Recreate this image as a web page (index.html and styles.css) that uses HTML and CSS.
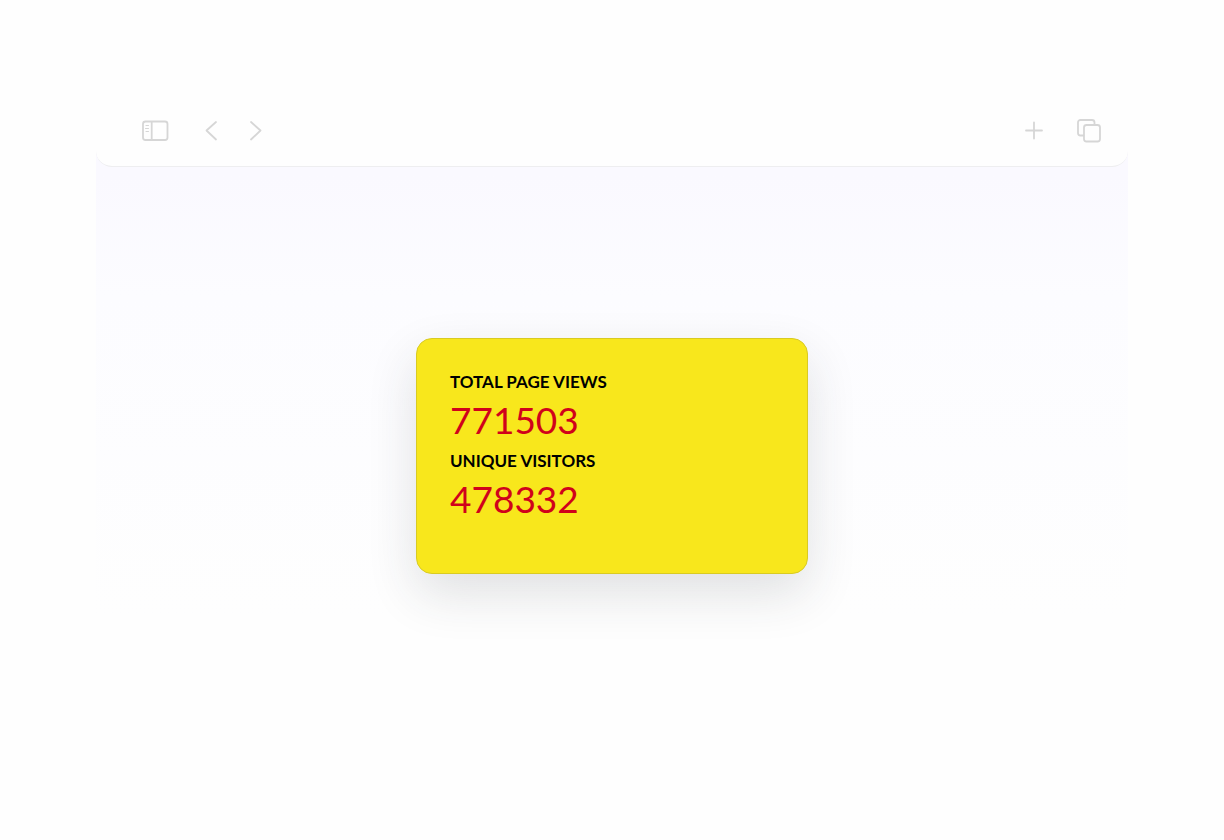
FILE: index.html
```html
<!DOCTYPE html>
<html lang="en">
<head>
  <meta charset="UTF-8">
  <meta name="viewport" content="width=device-width, initial-scale=1">
  <title>Page statistics</title>
  <link rel="stylesheet" href="styles.css">
</head>
<body>
<div class="window">
  <header class="toolbar">
    <div class="group">
      <button class="button" type="button" aria-label="Toggle sidebar">
        <svg width="28" height="28" viewBox="0 0 28 28">
          <rect x="2" y="4.500" width="24.500" height="18.500" rx="2.500"/>
          <path d="M10.700 5v18"/>
          <path class="thin" d="M5 8.500h2.500M4.500 11.500h3M5 14.500h2.500"/>
        </svg>
      </button>
      <button class="button back" type="button" aria-label="Back">
        <svg width="28" height="28" viewBox="0 0 28 28">
          <path d="M18 5L8.500 13.500l9.500 9"/>
        </svg>
      </button>
      <button class="button" type="button" aria-label="Forward">
        <svg width="28" height="28" viewBox="0 0 28 28">
          <path d="M9 5l9.500 8.500-9.500 9"/>
        </svg>
      </button>
    </div>
    <div class="group">
      <button class="button" type="button" aria-label="New tab">
        <svg width="28" height="28" viewBox="0 0 28 28">
          <path d="M14 5.500v16M6 13.500h16"/>
        </svg>
      </button>
      <button class="button" type="button" aria-label="Show all tabs">
        <svg width="28" height="28" viewBox="0 0 28 28">
          <path d="M8.500 18.500H5.500A2.500 2.500 0 0 1 3 16V5.500A2.500 2.500 0 0 1 5.500 3H17a2.500 2.500 0 0 1 2.500 2.500V8"/>
          <rect x="9" y="8" width="16" height="16.500" rx="2.500"/>
        </svg>
      </button>
    </div>
  </header>
  <main class="content">
    <dl class="card">
      <dt class="label">TOTAL PAGE VIEWS</dt>
      <dd class="number">771503</dd>
      <dt class="label">UNIQUE VISITORS</dt>
      <dd class="number">478332</dd>
    </dl>
  </main>
</div>
</body>
</html>
```
FILE: styles.css
```css
* {
    box-sizing: border-box;
}

body {
    margin: 0;
    padding: 96px;

    background: #fefefe;
    color: #000;
    font-family: Lato, sans-serif;
}

.window {
    background: linear-gradient(#faf9ff 80px, #fcfcff 200px, #fefefe 520px);
}

.toolbar {
    height: 71px;
    padding: 0 25px 0 45px;

    display: flex;
    align-items: center;
    justify-content: space-between;

    background: #fefefe;
    border-bottom: 1px solid #eeeef0;
    border-radius: 0 0 16px 16px;
}

.group {
    display: flex;
    align-items: center;
    gap: 16px;
}

.group:last-child {
    gap: 27px;
}

.button {
    width: 28px;
    height: 28px;
    padding: 0;

    background: none;
    border: 0;
}

.button svg {
    display: block;

    fill: none;
    stroke: #d6d6d6;
    stroke-width: 1.8;
    stroke-linecap: round;
    stroke-linejoin: round;
}

.button .thin {
    stroke-width: 1;
}

.back {
    margin-left: 13px;
}

.content {
    padding: 171px 24px;

    display: flex;
    justify-content: center;
}

.card {
    width: 100%;
    max-width: 392px;
    margin: 0;
    padding: 32px 33px 44px;

    background: #f8e71c;
    border: 1px solid #d9cb22;
    border-radius: 16px;
    box-shadow: 0 20px 50px rgba(40, 50, 60, 0.14);
}

.label {
    font-size: 17px;
    font-weight: 700;
    line-height: 22px;
}

.number {
    margin: 0 0 3px;

    color: #d0021b;
    font-size: 37px;
    line-height: 54px;
}
```
